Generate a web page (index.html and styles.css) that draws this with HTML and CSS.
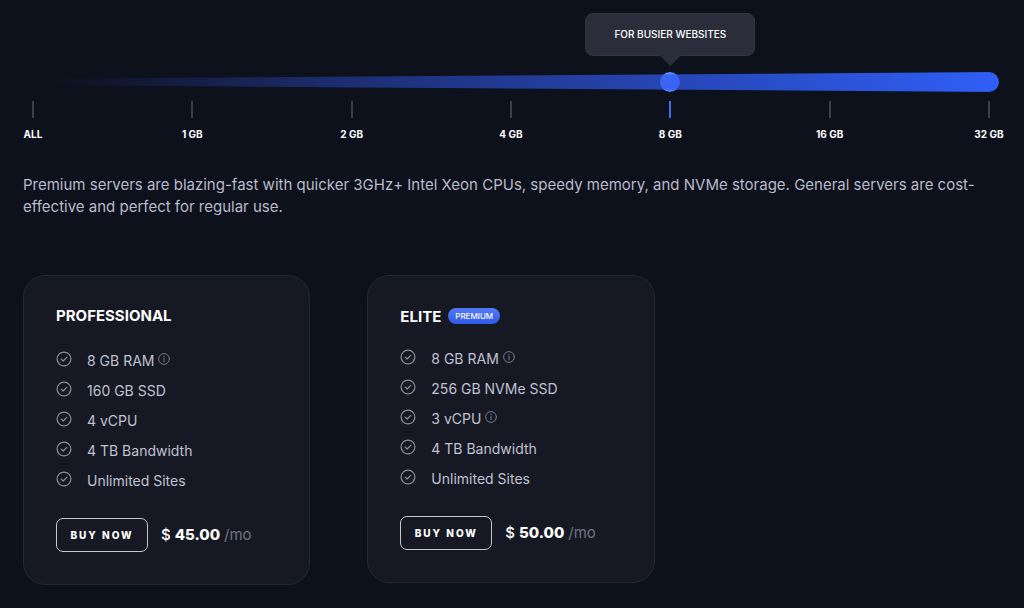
FILE: index.html
```html
<!DOCTYPE html>
<html lang="en">
<head>
<meta charset="utf-8">
<meta name="viewport" content="width=device-width, initial-scale=1">
<title>Server plans</title>
<link rel="stylesheet" href="styles.css">
</head>
<body>
<svg class="sprite" aria-hidden="true">
  <symbol id="check" viewBox="0 0 16 16"><circle cx="8" cy="8" r="6.9"/><path d="M5.2 8.1l2 1.9 3.6-3.6"/></symbol>
  <symbol id="info" viewBox="0 0 12 12"><circle cx="6" cy="6" r="5.4"/><path d="M6 5.2v3.6M6 3.1v.6"/></symbol>
</svg>
<main class="page">
  <section class="picker">
    <div class="slider">
      <div class="track"></div>
      <input class="range" type="range" min="0" max="6" step="1" value="4" aria-label="Server memory">
      <output class="tooltip">FOR BUSIER WEBSITES</output>
    </div>
    <ul class="scale">
      <li class="stop">ALL</li>
      <li class="stop">1 GB</li>
      <li class="stop">2 GB</li>
      <li class="stop">4 GB</li>
      <li class="stop stop-active">8 GB</li>
      <li class="stop">16 GB</li>
      <li class="stop">32 GB</li>
    </ul>
  </section>
  <p class="intro">Premium servers are blazing-fast with quicker 3GHz+ Intel Xeon CPUs, speedy memory, and NVMe storage. General servers are cost-effective and perfect for regular use.</p>
  <section class="plans">
    <article class="card">
      <h2 class="name">PROFESSIONAL</h2>
      <ul class="features">
        <li class="feature"><svg class="check"><use href="#check"/></svg><span>8 GB RAM</span><svg class="info"><use href="#info"/></svg></li>
        <li class="feature"><svg class="check"><use href="#check"/></svg><span>160 GB SSD</span></li>
        <li class="feature"><svg class="check"><use href="#check"/></svg><span>4 vCPU</span></li>
        <li class="feature"><svg class="check"><use href="#check"/></svg><span>4 TB Bandwidth</span></li>
        <li class="feature"><svg class="check"><use href="#check"/></svg><span>Unlimited Sites</span></li>
      </ul>
      <div class="purchase">
        <button class="buy" type="button">BUY NOW</button>
        <p class="price">$ <strong class="amount">45.00</strong> <span class="period">/mo</span></p>
      </div>
    </article>
    <article class="card card-premium">
      <h2 class="name">ELITE <span class="badge">PREMIUM</span></h2>
      <ul class="features">
        <li class="feature"><svg class="check"><use href="#check"/></svg><span>8 GB RAM</span><svg class="info"><use href="#info"/></svg></li>
        <li class="feature"><svg class="check"><use href="#check"/></svg><span>256 GB NVMe SSD</span></li>
        <li class="feature"><svg class="check"><use href="#check"/></svg><span>3 vCPU</span><svg class="info"><use href="#info"/></svg></li>
        <li class="feature"><svg class="check"><use href="#check"/></svg><span>4 TB Bandwidth</span></li>
        <li class="feature"><svg class="check"><use href="#check"/></svg><span>Unlimited Sites</span></li>
      </ul>
      <div class="purchase">
        <button class="buy" type="button">BUY NOW</button>
        <p class="price">$ <strong class="amount">50.00</strong> <span class="period">/mo</span></p>
      </div>
    </article>
  </section>
</main>
</body>
</html>
```
FILE: styles.css
```css
* { box-sizing: border-box; margin: 0; padding: 0; }
body {
  background: #0d111c;
  color: #fff;
  font-family: Inter, "Liberation Sans", sans-serif;
}
ul { list-style: none; }
.sprite { display: none; }
.page { padding: 72px 25px 23px 23px; }

/* Memory slider */
.slider { position: relative; display: grid; align-items: center; }
.track, .range { grid-area: 1 / 1; width: 100%; height: 20px; }
.track {
  border-radius: 0 10px 10px 0;
  background: linear-gradient(90deg, rgba(48, 92, 250, 0) 3%, rgba(48, 80, 220, .45) 33%, #2f5ff8);
  clip-path: polygon(0 7px, 100% 0, 100% 100%, 0 13px);
}
.range { appearance: none; background: transparent; }
.range::-webkit-slider-thumb {
  appearance: none;
  width: 20px;
  height: 20px;
  border-radius: 50%;
  background: linear-gradient(125deg, #6690ff, #4370ff);
}
.tooltip {
  position: absolute;
  bottom: 36px;
  left: calc(10px + (100% - 20px) * 4 / 6);
  transform: translateX(-50%);
  padding: 12px 28px;
  border: 1px solid #343644;
  border-radius: 8px;
  background: #2b2d3b;
  font-size: 10px;
  font-weight: 500;
  line-height: 17px;
  white-space: nowrap;
}
.tooltip::after {
  content: "";
  position: absolute;
  top: 100%;
  left: 50%;
  width: 22px;
  height: 11px;
  margin-left: -11px;
  background: #2b2d3b;
  clip-path: polygon(0 0, 100% 0, 50% 100%);
}
.scale { display: flex; justify-content: space-between; margin-top: 9px; }
.stop {
  display: flex;
  flex-direction: column;
  align-items: center;
  gap: 8px;
  width: 20px;
  font-size: 10px;
  font-weight: 700;
  line-height: 16px;
  white-space: nowrap;
}
.stop::before { content: ""; width: 2px; height: 17px; background: #3d3f4b; }
.stop-active::before { background: #426cf0; }

.intro { margin-top: 32px; color: #b9bbc9; font-size: 15px; line-height: 22px; }

/* Plan cards */
.plans {
  display: grid;
  grid-template-columns: repeat(3, 1fr);
  gap: 57px;
  align-items: start;
  margin-top: 57px;
}
.card {
  padding: 27px 32px 32px;
  border: 1px solid #252734;
  border-radius: 22px;
  background: #161924;
}
.name {
  display: flex;
  align-items: center;
  gap: 7px;
  height: 24px;
  font-size: 15px;
  font-weight: 700;
}
.badge {
  padding: 0 7px;
  border-radius: 8px;
  background: linear-gradient(#5179f5, #315be6);
  font-size: 8px;
  font-weight: 500;
  line-height: 16px;
}
.features { margin-top: 19px; color: #c0c2d0; font-size: 14px; line-height: 30px; }
.feature { display: flex; align-items: center; height: 30px; }
.check, .info { flex: none; fill: none; stroke: #8d8f9e; stroke-linecap: round; stroke-linejoin: round; }
.check { width: 16px; height: 16px; margin: 0 15px 4px 0; stroke-width: 1.2; }
.info { width: 12px; height: 12px; margin: 0 0 4px 4px; stroke: #777988; }
.purchase { display: flex; align-items: center; gap: 13px; margin-top: 22px; }
.buy {
  width: 92px;
  height: 34px;
  border: 1px solid #c4c5ce;
  border-radius: 7px;
  background: transparent;
  color: #fff;
  font: 800 10px Inter, "Liberation Sans", sans-serif;
  letter-spacing: 2px;
  white-space: nowrap;
}
.price { font-size: 15px; font-weight: 500; line-height: 20px; white-space: nowrap; }
.amount { font-weight: 800; }
.period { color: #727482; font-weight: 400; }
.card-premium .name { height: 26px; }
.card-premium .features { margin-top: 15px; }
```
